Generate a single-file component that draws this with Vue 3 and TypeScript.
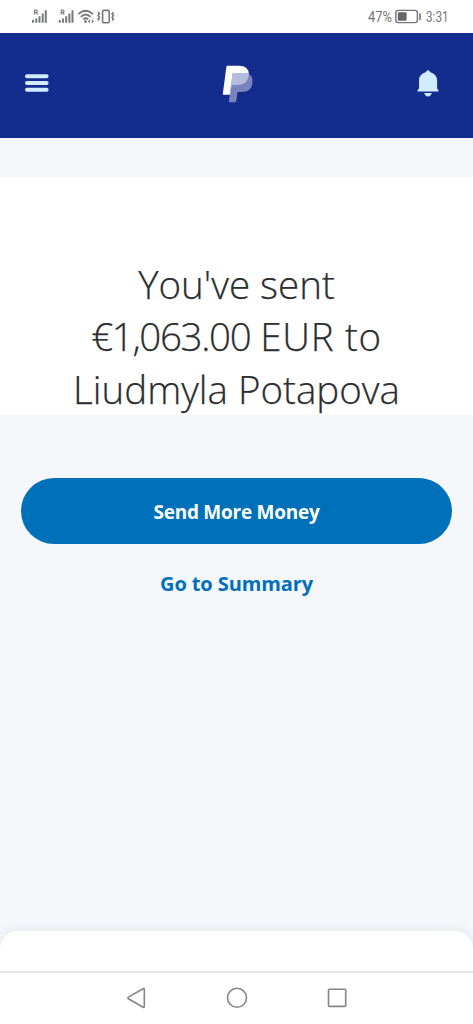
<script setup lang="ts">
const amount = '€1,063.00'
const currency = 'EUR'
const recipient = 'Liudmyla Potapova'
</script>

<template>
  <div class="screen">
    <div class="status">
      <svg class="signals" width="90" height="32" viewBox="30 0 90 32" fill="none" stroke="#77787b">
        <g stroke-width="2">
          <path d="M33 20v2.8M36.3 18.5v4.3M39.5 16.2v6.6M42.7 13.4v9.4M45.8 10.2v12.6" />
          <path d="M34.5 14.6V10h1.6q1.3 0 1.3 1.2t-1.3 1.2h-1.5m1.5 0l1.4 2.2" stroke-width="1.1" />
        </g>
        <g stroke-width="2" transform="translate(26.7 0)">
          <path d="M33 20v2.8M36.3 18.5v4.3M39.5 16.2v6.6M42.7 13.4v9.4M45.8 10.2v12.6" />
          <path d="M34.5 14.6V10h1.6q1.3 0 1.3 1.2t-1.3 1.2h-1.5m1.5 0l1.4 2.2" stroke-width="1.1" />
        </g>
        <path d="M78.4 14.2Q85.5 7.2 93 14.2M80.8 16.9Q85.6 12.2 90.6 16.9M83.2 19.4Q85.6 17.2 88.1 19.4" stroke-width="1.8" />
        <circle cx="85.5" cy="21.6" r="1.4" fill="#77787b" stroke="none" />
        <path d="M90 19.8l-1.3 1.4 1.3 1.4M91.9 19.8l1.3 1.4-1.3 1.4" stroke-width="1.2" />
        <rect x="102.6" y="10.4" width="6.6" height="12.4" rx="1" stroke-width="1.6" />
        <path d="M98.1 12.2l1.3 1.6-1.3 1.8 1.3 1.8-1.3 1.8 1.2 1.4M113.4 12.2l-1.3 1.6 1.3 1.8-1.3 1.8 1.3 1.8-1.2 1.4" stroke-width="1.6" />
      </svg>
      <svg class="power" width="90" height="32" viewBox="366 0 90 32">
        <text x="368" y="22.2" textLength="24" lengthAdjust="spacingAndGlyphs">47%</text>
        <rect x="395.8" y="10.4" width="21.6" height="12.2" rx="2.6" fill="none" stroke="#737477" stroke-width="1.4" />
        <rect x="397.8" y="12.2" width="8.8" height="8.6" rx="1" fill="#66676a" />
        <path d="M420 13.7v5.8" stroke="#737477" stroke-width="1.6" stroke-linecap="round" />
        <text x="426" y="22.2" textLength="22.6" lengthAdjust="spacingAndGlyphs">3:31</text>
      </svg>
    </div>

    <header class="header">
      <svg width="24" height="18" viewBox="0 0 24 18" stroke="#cfedff" stroke-width="4" stroke-linecap="round">
        <path d="M2 2.2h19.6M2 9h19.6M2 15.8h19.6" />
      </svg>
      <svg width="32" height="38" viewBox="0 0 32 38">
        <path d="M5.5.8H17q9.8 0 9.8 8.6Q26.8 20 14.8 20H9.8L8.2 29.8H1.5Q.7 29.8.8 29L4.4 1.7Q4.6.8 5.5.8Z" fill="#fff" />
        <path d="M11.8 8H22q8.5 0 8.5 8Q30.5 27 19.7 27h-4.1l-1.3 9.1q-.2 1.2-1.4 1.2H7.7q-1 0-.8-1.1L10.5 9.2Q10.7 8 11.8 8Z" fill="#7884be" />
        <path d="M11.8 8H26.7q.2 12-11.9 12H9.8L8.2 29.8h-.5L10.5 9.2Q10.7 8 11.8 8Z" fill="#b5bdde" />
      </svg>
      <svg width="22" height="27" viewBox="0 0 22 27" fill="#cfedff">
        <path d="M9.4 1.2a2.2 2.2 0 0 1 3.2 0l.8 1.1q6.4 1.9 6.7 8.2v8.1l1.2 1.5q.8 1.4-.7 1.4H1.4Q-.1 21.5.7 20.1l1.3-1.5v-8.1q.2-6.3 6.6-8.2Z" />
        <path d="M7.3 23h7.4Q14 26.4 11 26.4T7.3 23Z" />
      </svg>
    </header>

    <main>
      <h1 class="message">
        <span>You've sent</span>
        <span><span class="amount">{{ amount }}</span> <span class="currency">{{ currency }} to</span></span>
        <span>{{ recipient }}</span>
      </h1>
      <div class="actions">
        <button class="primary" type="button">Send More Money</button>
        <a class="link">Go to Summary</a>
      </div>
    </main>

    <div class="sheet"></div>
    <nav class="nav">
      <svg width="22" height="22" viewBox="0 0 22 22"><path d="M2.5 10.1L17.1 1.8q1.2-.6 1.2.7v17q0 1.3-1.2.7L2.5 11.7q-1.4-.8 0-1.6Z" /></svg>
      <svg width="22" height="22" viewBox="0 0 22 22"><circle cx="11" cy="10.8" r="9.5" /></svg>
      <svg width="22" height="22" viewBox="0 0 22 22"><rect x="2.5" y="2.2" width="17.2" height="17.2" rx="1" /></svg>
    </nav>
  </div>
</template>

<style>
body {
  background: #f5f7fb;
}
</style>

<style scoped>
.screen {
  display: flex;
  flex-direction: column;
  height: 1024px;
  overflow: hidden;
  background: #f5f7fb;
  font-family: 'Open Sans', 'Noto Sans', sans-serif;
}
.status {
  display: flex;
  justify-content: space-between;
  box-sizing: border-box;
  height: 33px;
  padding: 0 17px 0 30px;
  background: #fff;
}
.power text {
  font: 400 15.5px Roboto, sans-serif;
  fill: #737477;
}
.header {
  display: grid;
  grid-template-columns: 24px 1fr 22px;
  align-items: center;
  justify-items: center;
  box-sizing: border-box;
  height: 105px;
  padding: 0 34px 5px 25px;
  background: #142c8e;
}
.header svg:nth-child(2) {
  margin: 2px 0 0 9px;
}
main {
  flex: 1;
}
.message {
  display: flex;
  flex-direction: column;
  align-items: center;
  box-sizing: border-box;
  height: 238px;
  margin: 39px 0 0;
  padding-top: 81px;
  background: #fff;
  color: #2c2e2f;
  font-size: 38.5px;
  font-weight: 300;
  line-height: 52.3px;
  white-space: nowrap;
  -webkit-text-stroke: 0.25px #2c2e2f;
}
.amount {
  letter-spacing: -1.35px;
}
.currency {
  letter-spacing: 0.7px;
}
.actions {
  display: flex;
  flex-direction: column;
  align-items: center;
  padding: 63px 21px 0;
  font-weight: 700;
}
.primary {
  width: 100%;
  height: 66px;
  padding: 2px 0 0;
  border: 0;
  border-radius: 33px;
  background: #0070ba;
  color: #fff;
  font: inherit;
  font-size: 19px;
  letter-spacing: -0.25px;
}
.link {
  margin-top: 25px;
  color: #0070ba;
  font-size: 20px;
  line-height: 30px;
  letter-spacing: -0.1px;
}
.sheet {
  height: 40px;
  border-radius: 18px 18px 0 0;
  background: #fff;
  box-shadow: 0 0 12px rgba(40, 45, 55, 0.1);
}
.nav {
  display: flex;
  justify-content: center;
  gap: 78px;
  box-sizing: border-box;
  height: 53px;
  padding-top: 14px;
  border-top: 2px solid #e9e9ea;
  background: #fff;
  z-index: 1;
}
.nav svg {
  fill: none;
  stroke: #858585;
  stroke-width: 1.6;
}
</style>
